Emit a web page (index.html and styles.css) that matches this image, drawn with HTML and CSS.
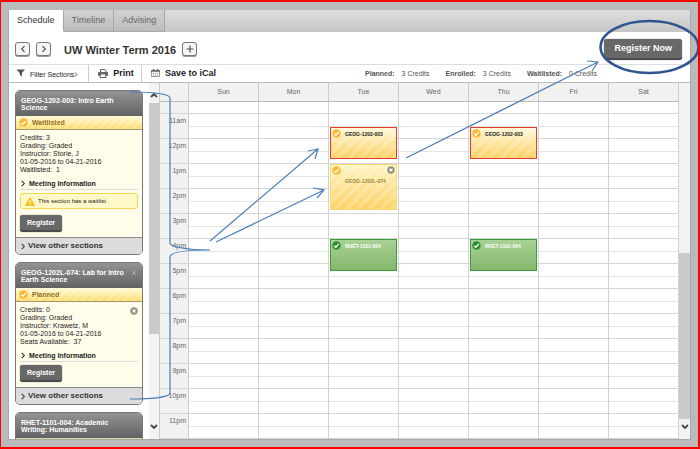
FILE: index.html
```html
<!DOCTYPE html>
<html lang="en">
<head>
    <meta charset="UTF-8">
    <meta name="viewport" content="width=device-width, initial-scale=1.0">
    <title>Schedule</title>
    <link rel="stylesheet" href="styles.css">
</head>
<body>
    <!-- Shared icons -->
    <svg class="sprite" aria-hidden="true">
        <symbol id="check" viewBox="0 0 10 10">
            <circle cx="5" cy="5" r="4.7" fill="currentColor"/>
            <path d="M2.5 5.2 4.3 7 7.6 3.2" fill="none" stroke="#fff" stroke-width="1.5"/>
        </symbol>
        <symbol id="close" viewBox="0 0 8 8">
            <circle cx="4" cy="4" r="3.7" fill="#8f9183"/>
            <path d="M2.6 2.6 5.4 5.4M5.4 2.6 2.6 5.4" stroke="#fff" stroke-width="1.2"/>
        </symbol>
        <symbol id="right" viewBox="0 0 6 8">
            <path d="M1.5 1 4.5 4 1.5 7" fill="none" stroke="currentColor" stroke-width="1.2"/>
        </symbol>
        <symbol id="up" viewBox="0 0 8 6">
            <path d="M1 5 4 2 7 5" fill="none" stroke="#444" stroke-width="1.8"/>
        </symbol>
        <symbol id="down" viewBox="0 0 8 6">
            <path d="M1 1 4 4 7 1" fill="none" stroke="#444" stroke-width="1.8"/>
        </symbol>
    </svg>

    <div class="app">
        <nav class="tabs">
            <a href="#" class="tab active">Schedule</a>
            <a href="#" class="tab">Timeline</a>
            <a href="#" class="tab">Advising</a>
        </nav>

        <header class="term">
            <button class="square" aria-label="Previous term"><svg viewBox="0 0 8 8"><path d="M5.5 1.2 2.7 4 5.5 6.8"/></svg></button>
            <button class="square" aria-label="Next term"><svg viewBox="0 0 8 8"><path d="M2.5 1.2 5.3 4 2.5 6.8"/></svg></button>
            <h1>UW Winter Term 2016</h1>
            <button class="square" aria-label="Add term"><svg viewBox="0 0 8 8"><path d="M4 0.5V7.5M0.5 4H7.5"/></svg></button>
            <button class="dark register-now">Register Now</button>
        </header>

        <div class="toolbar">
            <a href="#" class="tool filter">
                <svg width="10" height="8" viewBox="0 0 10 8"><path d="M0.5 0.5H9L6 4V7.5L3.7 6V4Z" fill="#555"/></svg>
                <span>Filter Sections</span><svg class="more" width="4" height="7"><use href="#right"/></svg>
            </a>
            <a href="#" class="tool print">
                <svg width="10" height="9" viewBox="0 0 10 9"><path d="M2.5 3V0.5H7L7.8 1.4V3" fill="#fff" stroke="#666"/><rect y="3" width="10" height="4" rx="1" fill="#666"/><rect x="2.2" y="5" width="5.6" height="3.5" fill="#fff" stroke="#666"/></svg>
                Print
            </a>
            <a href="#" class="tool">
                <svg width="9" height="8" viewBox="0 0 9 8"><path d="M0.5 1.5H8.5V7.5H0.5Z" fill="#eee" stroke="#999"/><path d="M0 2H9M2.5 0V2M6.5 0V2" stroke="#666" stroke-width="1.4"/><path d="M2 4.5H7M2 6H7" stroke="#aaa" stroke-dasharray="1 1"/></svg>
                Save to iCal
            </a>
            <div class="totals">
                <span><b>Planned:</b> 3 Credits</span>
                <span><b>Enrolled:</b> 3 Credits</span>
                <span><b>Waitlisted:</b> 0 Credits</span>
            </div>
        </div>

        <main class="content">
            <aside class="sidebar">
                <div class="cards">
                    <section class="card">
                        <h2>GEOG-1202-003: Intro Earth Science</h2>
                        <div class="status"><svg width="9" height="9"><use href="#check"/></svg>Waitlisted</div>
                        <div class="details">
                            <p>Credits: 3</p>
                            <p>Grading: Graded</p>
                            <p>Instructor: Storie, J</p>
                            <p>01-05-2016 to 04-21-2016</p>
                            <p>Waitlisted: &nbsp;1</p>
                            <a href="#" class="meeting"><svg width="6" height="7"><use href="#right"/></svg>Meeting Information</a>
                            <div class="notice">
                                <svg width="10" height="9" viewBox="0 0 10 9"><path d="M5 0.5 9.6 8.5H0.4Z" fill="#fbbf24" stroke="#fbbf24" stroke-linejoin="round"/><path d="M5 3V5.8M5 6.6V7.8" stroke="#fff" stroke-width="1.2"/></svg>
                                This section has a waitlist
                            </div>
                            <button class="dark">Register</button>
                        </div>
                        <a href="#" class="others"><svg width="6" height="7"><use href="#right"/></svg>View other sections</a>
                    </section>

                    <section class="card">
                        <h2>GEOG-1202L-074: Lab for Intro Earth Science</h2>
                        <button class="remove" aria-label="Remove"><svg width="6" height="6" viewBox="0 0 6 6"><path d="M1 1 5 5M5 1 1 5" stroke="#aaa"/></svg></button>
                        <div class="status"><svg width="9" height="9"><use href="#check"/></svg>Planned</div>
                        <div class="details">
                            <button class="drop" aria-label="Drop"><svg width="8" height="8"><use href="#close"/></svg></button>
                            <p>Credits: 0</p>
                            <p>Grading: Graded</p>
                            <p>Instructor: Krawetz, M</p>
                            <p>01-05-2016 to 04-21-2016</p>
                            <p>Seats Available: &nbsp;37</p>
                            <a href="#" class="meeting"><svg width="6" height="7"><use href="#right"/></svg>Meeting Information</a>
                            <button class="dark">Register</button>
                        </div>
                        <a href="#" class="others"><svg width="6" height="7"><use href="#right"/></svg>View other sections</a>
                    </section>

                    <section class="card enrolled">
                        <h2>RHET-1101-004: Academic Writing: Humanities</h2>
                        <div class="status"></div>
                    </section>
                </div>
                <div class="scroll">
                    <svg width="8" height="6"><use href="#up"/></svg>
                    <div class="track"><div class="thumb side-thumb"></div></div>
                    <svg width="8" height="6"><use href="#down"/></svg>
                </div>
            </aside>

            <div class="calendar">
                <div class="week">
                    <table>
                        <thead>
                            <tr><th class="time"></th><th>Sun</th><th>Mon</th><th>Tue</th><th>Wed</th><th>Thu</th><th>Fri</th><th>Sat</th></tr>
                        </thead>
                        <tbody>
                            <tr class="half"><th></th><td></td><td></td><td></td><td></td><td></td><td></td><td></td></tr>
                            <tr>
                                <th>11am</th><td></td><td></td>
                                <td><div class="event waitlisted"><svg width="9" height="9"><use href="#check"/></svg>GEOG-1202-003</div></td>
                                <td></td>
                                <td><div class="event waitlisted"><svg width="9" height="9"><use href="#check"/></svg>GEOG-1202-003</div></td>
                                <td></td><td></td>
                            </tr>
                            <tr><th>12pm</th><td></td><td></td><td></td><td></td><td></td><td></td><td></td></tr>
                            <tr>
                                <th>1pm</th><td></td><td></td>
                                <td><div class="event planned"><svg width="9" height="9"><use href="#check"/></svg><span>GEOG-1202L-074</span><button class="drop" aria-label="Drop"><svg width="8" height="8"><use href="#close"/></svg></button></div></td>
                                <td></td><td></td><td></td><td></td>
                            </tr>
                            <tr><th>2pm</th><td></td><td></td><td></td><td></td><td></td><td></td><td></td></tr>
                            <tr><th>3pm</th><td></td><td></td><td></td><td></td><td></td><td></td><td></td></tr>
                            <tr>
                                <th>4pm</th><td></td><td></td>
                                <td><div class="event registered"><svg width="9" height="9"><use href="#check"/></svg>RHET-1101-004</div></td>
                                <td></td>
                                <td><div class="event registered"><svg width="9" height="9"><use href="#check"/></svg>RHET-1101-004</div></td>
                                <td></td><td></td>
                            </tr>
                            <tr><th>5pm</th><td></td><td></td><td></td><td></td><td></td><td></td><td></td></tr>
                            <tr><th>6pm</th><td></td><td></td><td></td><td></td><td></td><td></td><td></td></tr>
                            <tr><th>7pm</th><td></td><td></td><td></td><td></td><td></td><td></td><td></td></tr>
                            <tr><th>8pm</th><td></td><td></td><td></td><td></td><td></td><td></td><td></td></tr>
                            <tr><th>9pm</th><td></td><td></td><td></td><td></td><td></td><td></td><td></td></tr>
                            <tr><th>10pm</th><td></td><td></td><td></td><td></td><td></td><td></td><td></td></tr>
                            <tr><th>11pm</th><td></td><td></td><td></td><td></td><td></td><td></td><td></td></tr>
                        </tbody>
                    </table>
                </div>
                <div class="scroll">
                    <div class="track"><div class="thumb cal-thumb"></div></div>
                    <svg width="8" height="6"><use href="#down"/></svg>
                </div>
            </div>
        </main>
    </div>

    <!-- Hand-drawn notes on top of the page -->
    <svg class="notes" viewBox="0 0 700 449" aria-hidden="true">
        <path d="M130 92C152 92 170 94 170 98V243C170 247 188 250 210 250C188 250 170 252 170 257V393C170 397 152 399 130 399"/>
        <path d="M210 241 318 149M308 151 318 149 315 159"/>
        <path d="M216 242 324 190M313 188 324 190 317 198"/>
        <path d="M406 158 598 62M587 61 598 62 592 71"/>
        <ellipse cx="649.5" cy="47" rx="49" ry="26"/>
    </svg>
</body>
</html>
```

FILE: styles.css
```css
* {
    margin: 0;
    padding: 0;
    box-sizing: border-box;
}

body {
    position: relative;
    height: 100vh;
    padding: 8px 7px 7px 7px;
    border: 2px solid #fe0000;
    border-left-width: 1px;
    background: #bababa;
    font-family: "Liberation Sans", Arial, sans-serif;
    font-size: 7px;
    line-height: 8px;
    color: #222;
    overflow: hidden;
}

a {
    color: inherit;
    text-decoration: none;
}

button {
    border: none;
    background: none;
    font-family: inherit;
    cursor: pointer;
}

svg {
    display: block;
    flex: none;
}

.sprite {
    position: absolute;
    width: 0;
    height: 0;
}

.app {
    display: flex;
    flex-direction: column;
    height: 100%;
    background: #fff;
    border: 1px solid #a8a8a8;
    border-top: none;
}

/* Tabs */
.tabs {
    display: flex;
    height: 22px;
    background: linear-gradient(#dedede, #c6c6c6);
}

.tab {
    padding: 0 8px;
    border-right: 1px solid #a5a5a5;
    border-bottom: 1px solid #aaa;
    background: linear-gradient(#d2d2d2, #bcbcbc);
    color: #666;
    font-size: 9px;
    line-height: 21px;
}

.tab.active {
    background: #fff;
    border-bottom-color: #fff;
    color: #333;
}

/* Term header */
.term {
    display: flex;
    align-items: center;
    gap: 6px;
    height: 33px;
    padding: 2px 8px 0 6px;
    border-bottom: 1px solid #ddd;
}

.term h1 {
    margin: 2px 0 0 7px;
    font-size: 11px;
    line-height: 14px;
    color: #333;
}

.square {
    display: flex;
    align-items: center;
    justify-content: center;
    width: 15px;
    height: 14px;
    border: 1px solid #777;
    border-radius: 3px;
    background: #f5f5f5;
    box-shadow: 0 1px 0 #999;
}

.square svg {
    width: 8px;
    height: 8px;
    fill: none;
    stroke: #555;
    stroke-width: 1.2;
}

.dark {
    height: 17px;
    padding: 0 7px;
    border-radius: 3px;
    border-bottom: 2px solid #4b4b4b;
    background: #686868;
    box-shadow: 0 0 1px #333;
    color: #fff;
    font-size: 7px;
    font-weight: bold;
}

.register-now {
    height: 21px;
    margin-left: auto;
    padding: 0 10px;
    font-size: 9px;
}

/* Toolbar */
.toolbar {
    display: flex;
    height: 18px;
    border-bottom: 1px solid #bbb;
}

.tool {
    display: flex;
    align-items: center;
    gap: 5px;
    padding: 0 9px 1px;
    font-size: 9px;
    font-weight: bold;
}

.filter {
    gap: 4px;
    padding: 0 10px 1px 7px;
    border-right: 1px solid #ccc;
    font-size: 7px;
    font-weight: normal;
}

.filter span {
    padding-top: 4px;
}

.filter .more {
    margin: 3px 0 0 -4px;
}

.print {
    padding-right: 7px;
    border-right: 1px solid #ccc;
}

.totals {
    display: flex;
    gap: 16px;
    margin-left: auto;
    padding-right: 93px;
    line-height: 18px;
    color: #555;
}

.totals b {
    margin-right: 5px;
}

/* Section list */
.content {
    display: flex;
    flex: 1;
    min-height: 0;
}

.sidebar {
    display: flex;
    flex: none;
    justify-content: space-between;
    width: 151px;
    padding-left: 6px;
    border-right: 1px solid #ccc;
    overflow: hidden;
}

.cards {
    display: flex;
    flex-direction: column;
    gap: 7px;
    width: 128px;
    padding-top: 7px;
}

.card {
    position: relative;
    flex: none;
    border: 1px solid #777;
    border-radius: 5px;
    background: #fffdea;
    overflow: hidden;
}

.card h2 {
    height: 25px;
    padding: 6px 16px 0 5px;
    background: linear-gradient(#939393, #626262);
    color: #fff;
    font-size: 7px;
    line-height: 7px;
}

.status {
    display: flex;
    align-items: center;
    gap: 4px;
    height: 14px;
    padding-left: 3px;
    border-bottom: 1px solid #a09a70;
    background: repeating-linear-gradient(135deg, #fff3 0 3px, #fff0 3px 6px), linear-gradient(#fff9d5, #fddc6c);
    color: #94712a;
    font-size: 7px;
    font-weight: bold;
}

.status svg,
.waitlisted svg,
.planned svg {
    color: #fcb92f;
}

.enrolled .status {
    background: #c9e39c;
}

.details {
    position: relative;
    padding: 4px 4px 5px;
}

.meeting {
    display: flex;
    align-items: center;
    gap: 3px;
    height: 12px;
    margin: 4px 0 3px;
    border-bottom: 1px solid #ddd;
    font-weight: bold;
}

.notice {
    display: flex;
    align-items: center;
    gap: 3px;
    height: 16px;
    margin-bottom: 6px;
    padding-left: 4px;
    border: 1px solid #f5d64e;
    border-radius: 3px;
    background: #fff8c8;
    font-size: 6px;
}

.others {
    display: flex;
    align-items: center;
    gap: 2px;
    height: 17px;
    padding-left: 4px;
    border-top: 1px solid #888;
    background: #dcdcdc;
    color: #333;
    font-size: 8px;
    font-weight: bold;
}

.remove {
    position: absolute;
    top: 7px;
    right: 5px;
}

.drop {
    position: absolute;
    top: 5px;
    right: 4px;
}

/* Scrollbars */
.scroll {
    display: flex;
    flex: none;
    flex-direction: column;
    align-items: center;
    gap: 5px;
    width: 10px;
    padding: 9px 0;
    background: #f3f3f3;
}

.track {
    flex: 1;
    width: 100%;
}

.thumb {
    background: #cacaca;
}

.side-thumb {
    height: 73%;
}

/* Calendar */
.calendar {
    display: flex;
    flex: 1;
    min-width: 0;
    overflow: hidden;
}

.week {
    flex: 1;
    min-width: 0;
}

.calendar table {
    width: 100%;
    border-collapse: separate;
    border-spacing: 0;
    table-layout: fixed;
    color: #666;
}

.calendar th {
    height: 25px;
    border-right: 1px solid #ccc;
    border-bottom: 1px solid #d5d5d5;
    background: #f1f1f1;
    font-weight: normal;
}

.calendar thead th {
    height: 19px;
    border-bottom-color: #bbb;
}

.calendar .time {
    width: 29px;
}

.calendar tbody th {
    padding-right: 2px;
    text-align: right;
    vertical-align: top;
    line-height: 14px;
}

.calendar td {
    position: relative;
    border-right: 1px solid #d2d2d2;
    border-bottom: 1px solid #d5d5d5;
    background: linear-gradient(#e4e4e4, #e4e4e4) 0 12px / 100% 1px no-repeat;
}

.calendar .half th,
.calendar .half td {
    height: 12px;
    line-height: 8px;
    background-image: none;
}

.calendar .scroll {
    width: 11px;
    padding-top: 0;
}

.calendar .track {
    padding-top: 170px;
}

.cal-thumb {
    height: 100%;
}

.event {
    position: absolute;
    z-index: 1;
    left: 1px;
    right: 1px;
    display: flex;
    align-items: flex-start;
    gap: 4px;
    padding: 1px;
    font-size: 5px;
    font-weight: bold;
    line-height: 10px;
    color: #222;
}

.waitlisted {
    top: 13px;
    height: 32px;
    border: 1px solid #e33c2d;
    background: repeating-linear-gradient(135deg, #fff3 0 4px, #fff0 4px 8px), linear-gradient(#fff8d8, #fdd163);
}

.planned {
    top: 0;
    height: 46px;
    border: 1px solid #fcd971;
    background: repeating-linear-gradient(135deg, #fff3 0 4px, #fff0 4px 8px), linear-gradient(#fff5c4, #fdd163);
    color: #a28340;
}

.planned span {
    padding-top: 10px;
}

.planned .drop {
    top: 1px;
    right: 1px;
}

.registered {
    top: 0;
    height: 32px;
    border: 1px solid #399b39;
    background: linear-gradient(#a9d396, #86b66c);
    color: #fff;
}

.registered svg {
    color: #2c8f2f;
}

.notes {
    position: absolute;
    z-index: 5;
    top: -2px;
    left: -1px;
    width: 100vw;
    height: 100vh;
    fill: none;
    stroke: #4a7ebb;
    stroke-width: 1.2;
    pointer-events: none;
}

.notes ellipse {
    stroke: #2f5590;
    stroke-width: 2.5;
}
```
